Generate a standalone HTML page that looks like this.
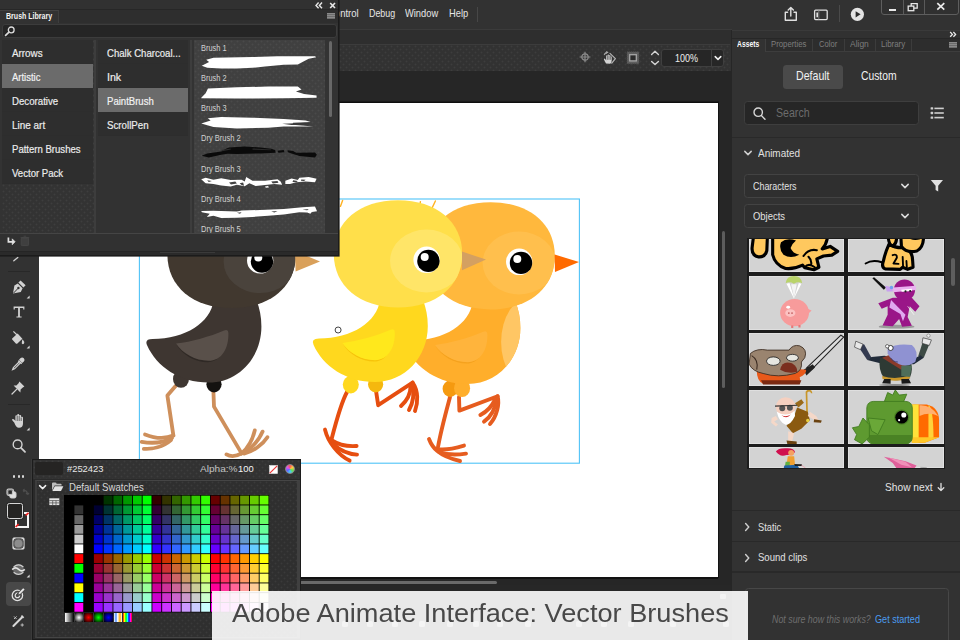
<!DOCTYPE html>
<html lang="en">
<head>
<meta charset="utf-8">
<title>Adobe Animate Interface: Vector Brushes</title>
<style>
*{box-sizing:border-box;margin:0;padding:0}
html,body{width:960px;height:640px;overflow:hidden;background:#323232}
body{position:relative;font-family:"Liberation Sans",sans-serif;color:#e4e4e4;font-size:11px}
.abs{position:absolute}
#app{position:absolute;left:0;top:0;width:960px;height:640px;overflow:hidden;background:#323232}
.t{position:absolute;white-space:nowrap;line-height:1}
svg{position:absolute;overflow:visible}
/* top bars */
#menubar{left:0;top:0;width:960px;height:29px;background:#323232}
#bar2{left:0;top:29px;width:732px;height:15px;background:#2d2d2d;border-top:1px solid #3a3a3a}
#toolbar{left:0;top:44px;width:732px;height:27px;background:#323232;border-top:1px solid #3c3c3c}
#paste{left:38px;top:71px;width:694px;height:569px;background:#262626}
#stage{left:40px;top:103px;width:678px;height:474px;background:#fff}
#lefttools{left:0;top:71px;width:38px;height:569px;background:#323232}
#rpanel{left:732px;top:29px;width:228px;height:611px;background:#323232}
</style>
</head>
<body>
<div id="app">
<div class="abs" style="left:0px;top:0px;width:960px;height:29px;background:#323232;"></div>
<div class="abs" style="left:0px;top:29px;width:732px;height:15px;background:#2e2e2e;border-top:1px solid #3b3b3b;"></div>
<div class="abs" style="left:0px;top:44px;width:730.4px;height:26.599999999999994px;background:#323232;border-top:1px solid #3c3c3c;background-image:radial-gradient(circle at 1.5px 1.5px,rgba(255,255,255,.055) 0.6px,transparent 1.2px),radial-gradient(circle at 4.5px 4.5px,rgba(255,255,255,.055) 0.6px,transparent 1.2px);background-size:6px 6px;"></div>
<div class="abs" style="left:0px;top:71px;width:732px;height:569px;background:#262626;"></div>
<div class="abs" style="left:39px;top:585px;width:693px;height:55px;background:#272727;"></div>
<div class="abs" style="left:39px;top:101px;width:680px;height:1px;background:#1a1a1a;"></div>
<div class="abs" style="left:39px;top:102px;width:680px;height:1px;background:#0e0e0e;"></div>
<div class="abs" style="left:718px;top:102px;width:1.2000000000000455px;height:476px;background:#141414;"></div>
<div class="abs" style="left:39px;top:103px;width:679px;height:474px;background:#ffffff;"></div>
<div class="abs" style="left:39px;top:577px;width:679px;height:2px;background:#111;"></div>
<div class="abs" style="left:300px;top:580.8px;width:197px;height:3.400000000000091px;background:#6a6a6a;border-radius:2px;"></div>
<div class="abs" style="left:722px;top:231px;width:3px;height:157px;background:#5c5c5c;border-radius:2px;"></div>
<div class="abs" style="left:0px;top:71px;width:39px;height:569px;background:#323232;"></div>
<div class="t" style="left:327.50px;top:7.00px;height:13px;line-height:13px;font-size:11.2px;color:#e6e6e6;transform:scaleX(0.8503);transform-origin:0 50%;">Control</div>
<div class="t" style="left:368.80px;top:7.00px;height:13px;line-height:13px;font-size:11.2px;color:#e6e6e6;transform:scaleX(0.7938);transform-origin:0 50%;">Debug</div>
<div class="t" style="left:405.00px;top:7.00px;height:13px;line-height:13px;font-size:11.2px;color:#e6e6e6;transform:scaleX(0.8334);transform-origin:0 50%;">Window</div>
<div class="t" style="left:448.80px;top:7.00px;height:13px;line-height:13px;font-size:11.2px;color:#e6e6e6;transform:scaleX(0.8335);transform-origin:0 50%;">Help</div>
<div class="abs" style="left:477px;top:7px;width:1px;height:15px;background:#474747;"></div>
<svg style="left:783px;top:6px" width="16" height="16" viewBox="0 0 16 16" fill="none" stroke="#e0e0e0" stroke-width="1.4" stroke-linejoin="round" stroke-linecap="round"><path d="M4.6 6.2H2.3v8h11V6.2H11"/><path d="M7.8 10V1.6M5.2 4 7.8 1.4 10.4 4"/></svg>
<svg style="left:813px;top:8px" width="16" height="14" viewBox="0 0 16 14" fill="none" stroke="#e0e0e0" stroke-width="1.3"><rect x="1.6" y="2.2" width="12.6" height="9.4" rx="1"/><path d="M4.2 4.6v4.6" stroke-width="1.6"/><path d="M5.8 2.4v9" stroke="#7a7a7a" stroke-width="1"/></svg>
<div class="abs" style="left:838.5px;top:5px;width:1.0px;height:17px;background:#4a4a4a;"></div>
<svg style="left:850px;top:7px" width="15" height="15" viewBox="0 0 15 15"><circle cx="7.4" cy="7.3" r="6.6" fill="#e3e3e3"/><path d="M5.6 4.2 10.6 7.3 5.6 10.4Z" fill="#2b2b2b"/></svg>
<div class="abs" style="left:881px;top:-2px;width:78px;height:16.5px;background:#303030;border:1px solid #5e5e5e;border-radius:0 0 3px 3px;"></div>
<div class="abs" style="left:903px;top:0px;width:1px;height:14px;background:#5a5a5a;"></div>
<div class="abs" style="left:923.5px;top:0px;width:1.0px;height:14px;background:#5a5a5a;"></div>
<div class="abs" style="left:888.5px;top:8.5px;width:7.5px;height:2.0999999999999996px;background:#e8e8e8;"></div>
<svg style="left:907px;top:2px" width="13" height="11" viewBox="0 0 13 11" fill="none" stroke="#e8e8e8" stroke-width="1.3"><rect x="1.2" y="4.1" width="5.6" height="4.6"/><path d="M4.2 4V1.6h6v4.6H7"/></svg>
<svg style="left:935px;top:1px" width="12" height="11" viewBox="0 0 12 11" fill="none" stroke="#ececec" stroke-width="1.7"><path d="M2.3 2.2 9.3 8.6M9.3 2.2 2.3 8.6"/></svg>
<svg style="left:577px;top:49.4px" width="16" height="16" viewBox="0 0 16 16" fill="none" stroke="#8c8c8c" stroke-width="1.2"><circle cx="8" cy="8" r="3.2"/><path d="M8 2.8v10.4M2.6 8h10.8"/></svg>
<svg style="left:600px;top:49px" width="18" height="18" viewBox="0 0 18 18" fill="none" stroke-linejoin="round" stroke-linecap="round"><path d="M10 4.4 15.4 9.6 11.8 14.2" stroke="#b4b4b4" stroke-width="1.2"/><path d="M4.4 5.4Q5.6 3.4 7.6 3.4" stroke="#a8a8a8" stroke-width="1.2"/><path d="M7.6 3.4 6.6 2.4M7.6 3.4 6.4 4.4" stroke="#a8a8a8" stroke-width="1"/><path d="M6 14.6 4 10.8Q3.6 9.8 4.4 9.6Q5 9.6 5.4 10.2L6.2 11.4V7Q6.2 6.2 6.9 6.2Q7.6 6.2 7.6 7V6.2Q7.6 5.4 8.3 5.4Q9 5.4 9 6.2V6.8Q9 6 9.7 6Q10.4 6 10.4 6.8V7.8Q10.4 7.2 11 7.2Q11.7 7.2 11.7 8V11.6Q11.7 14.4 10 14.8Z" fill="#d4d4d4"/><path d="M7.6 7v3.4M9 6.8v3.6M10.4 7.8v2.6" stroke="#3a3a3a" stroke-width=".6"/></svg>
<svg style="left:625px;top:50px" width="16" height="16" viewBox="0 0 16 16"><rect x="2" y="1.8" width="12" height="12" fill="#5e5e5e" stroke="#4a4a4a" stroke-width="1" stroke-dasharray="1 1"/><rect x="4.7" y="4.7" width="6.6" height="6.2" fill="#2c2c2c" stroke="#a6a6a6" stroke-width="1.3"/></svg>
<svg style="left:649px;top:47px" width="12" height="22" viewBox="0 0 12 22" fill="none" stroke="#d4d4d4" stroke-width="1.4" stroke-linecap="round" stroke-linejoin="round"><path d="M2.6 7.4 6 4.2 9.4 7.4"/><path d="M2.6 14.4 6 17.6 9.4 14.4"/></svg>
<div class="abs" style="left:661px;top:48.5px;width:63px;height:18.0px;background:#262626;border:1px solid #3f3f3f;border-radius:3px;"></div>
<div class="abs" style="left:710.5px;top:49px;width:1.0px;height:17px;background:#3f3f3f;"></div>
<div class="t" style="left:674.50px;top:51.80px;height:13px;line-height:13px;font-size:10.6px;color:#ededed;transform:scaleX(0.8484);transform-origin:0 50%;">100%</div>
<svg style="left:712.6px;top:53px" width="10" height="10" viewBox="0 0 10 10" fill="none" stroke="#f0f0f0" stroke-width="1.5" stroke-linecap="round" stroke-linejoin="round"><path d="M2.2 3.6 5 6.4 7.8 3.6"/></svg>
<div class="abs" style="left:731px;top:29.5px;width:229px;height:610.5px;background:#323232;border-left:1px solid #262626;"></div>
<div class="abs" style="left:732px;top:29.5px;width:228px;height:9.0px;background:#313131;border-top:1px solid #3a3a3a;border-bottom:1px solid #272727;"></div>
<svg style="left:947.4px;top:30.2px" width="12" height="9" viewBox="0 0 12 9" fill="none" stroke="#ececec" stroke-width="1.3"><path d="M3.2 2 5.4 4.4 3.2 6.8M6.4 2 8.6 4.4 6.4 6.8"/></svg>
<div class="abs" style="left:732px;top:38.5px;width:228px;height:13.0px;background:#2d2d2d;border-bottom:1px solid #3d3d3d;"></div>
<div class="abs" style="left:732px;top:38.5px;width:33.5px;height:13.5px;background:#323232;border-right:1px solid #3f3f3f;"></div>
<div class="abs" style="left:812.0px;top:39px;width:1.0px;height:12px;background:#3c3c3c;"></div>
<div class="abs" style="left:843.5px;top:39px;width:1.0px;height:12px;background:#3c3c3c;"></div>
<div class="abs" style="left:875.0px;top:39px;width:1.0px;height:12px;background:#3c3c3c;"></div>
<div class="abs" style="left:910.5px;top:39px;width:1.0px;height:12px;background:#3c3c3c;"></div>
<div class="t" style="left:737.20px;top:38.90px;height:11px;line-height:11px;font-size:9.2px;color:#fafafa;transform:scaleX(0.7357);transform-origin:0 50%;font-weight:bold;">Assets</div>
<div class="t" style="left:770.60px;top:38.90px;height:11px;line-height:11px;font-size:9.2px;color:#7d7d7d;transform:scaleX(0.8442);transform-origin:0 50%;">Properties</div>
<div class="t" style="left:818.80px;top:38.90px;height:11px;line-height:11px;font-size:9.2px;color:#7d7d7d;transform:scaleX(0.8278);transform-origin:0 50%;">Color</div>
<div class="t" style="left:850.00px;top:38.90px;height:11px;line-height:11px;font-size:9.2px;color:#7d7d7d;transform:scaleX(0.9189);transform-origin:0 50%;">Align</div>
<div class="t" style="left:880.80px;top:38.90px;height:11px;line-height:11px;font-size:9.2px;color:#7d7d7d;transform:scaleX(0.8605);transform-origin:0 50%;">Library</div>
<div class="abs" style="left:948.8px;top:42px;width:8.0px;height:6px;background:#7b7b7b;background-image:repeating-linear-gradient(#8a8a8a 0 1.4px,#6c6c6c 1.4px 2px);"></div>
<div class="abs" style="left:783px;top:64.5px;width:59.5px;height:24.299999999999997px;background:#4a4a4a;border-radius:3.5px;"></div>
<div class="t" style="left:795.60px;top:68.70px;height:15px;line-height:15px;font-size:12.2px;color:#f2f2f2;transform:scaleX(0.8692);transform-origin:0 50%;">Default</div>
<div class="t" style="left:861.40px;top:68.70px;height:15px;line-height:15px;font-size:12.2px;color:#f2f2f2;transform:scaleX(0.8469);transform-origin:0 50%;">Custom</div>
<div class="abs" style="left:744.4px;top:101.2px;width:174.39999999999998px;height:23.39999999999999px;background:#262626;border:1px solid #3e3e3e;border-radius:3.5px;"></div>
<svg style="left:752px;top:105.5px" width="15" height="15" viewBox="0 0 15 15" fill="none" stroke="#d6d6d6" stroke-width="1.4" stroke-linecap="round"><circle cx="6.2" cy="6.2" r="4.2"/><path d="M9.4 9.6 13 13.2"/></svg>
<div class="t" style="left:775.60px;top:106.20px;height:14px;line-height:14px;font-size:12px;color:#6c6c6c;transform:scaleX(0.8837);transform-origin:0 50%;">Search</div>
<svg style="left:929.5px;top:106px" width="15" height="14" viewBox="0 0 15 14" fill="#cfcfcf"><rect x=".6" y="1.2" width="2.6" height="2.4" rx=".6"/><rect x="4.4" y="1.6" width="9.4" height="1.6"/><rect x=".6" y="5.8" width="2.6" height="2.4" rx=".6"/><rect x="4.4" y="6.2" width="9.4" height="1.6"/><rect x=".6" y="10.4" width="2.6" height="2.4" rx=".6"/><rect x="4.4" y="10.8" width="9.4" height="1.6"/></svg>
<div class="abs" style="left:732px;top:136.6px;width:228px;height:1.200000000000017px;background:#292929;"></div>
<svg style="left:743.2px;top:148px" width="10" height="10" viewBox="0 0 10 10" fill="none" stroke="#cfcfcf" stroke-width="1.5" stroke-linecap="round" stroke-linejoin="round"><path d="M1.8 3.4 5 6.6 8.2 3.4"/></svg>
<div class="t" style="left:757.60px;top:146.20px;height:14px;line-height:14px;font-size:11.8px;color:#e0e0e0;transform:scaleX(0.8425);transform-origin:0 50%;">Animated</div>
<div class="abs" style="left:744.4px;top:173.8px;width:174.39999999999998px;height:23.799999999999983px;background:#2f2f2f;border:1px solid #434343;border-radius:3.5px;"></div>
<div class="t" style="left:753.40px;top:178.90px;height:14px;line-height:14px;font-size:11.6px;color:#e2e2e2;transform:scaleX(0.7685);transform-origin:0 50%;">Characters</div>
<svg style="left:900px;top:181.1px" width="10" height="10" viewBox="0 0 10 10" fill="none" stroke="#dcdcdc" stroke-width="1.5" stroke-linecap="round" stroke-linejoin="round"><path d="M1.8 3.4 5 6.6 8.2 3.4"/></svg>
<div class="abs" style="left:744.4px;top:203.8px;width:174.39999999999998px;height:23.799999999999983px;background:#2f2f2f;border:1px solid #434343;border-radius:3.5px;"></div>
<div class="t" style="left:753.40px;top:208.90px;height:14px;line-height:14px;font-size:11.6px;color:#e2e2e2;transform:scaleX(0.8137);transform-origin:0 50%;">Objects</div>
<svg style="left:900px;top:211.1px" width="10" height="10" viewBox="0 0 10 10" fill="none" stroke="#dcdcdc" stroke-width="1.5" stroke-linecap="round" stroke-linejoin="round"><path d="M1.8 3.4 5 6.6 8.2 3.4"/></svg>
<svg style="left:929.6px;top:179.4px" width="14" height="14" viewBox="0 0 14 14"><path d="M.8 1h12.2L8.2 6.8V12.6L5.6 11V6.8Z" fill="#e0e0e0"/></svg>
<div class="abs" style="left:747.4px;top:238px;width:197.60000000000002px;height:230.8px;background:#1c1c1c;"></div>
<div class="abs" style="left:748.6px;top:239.3px;width:95.79999999999995px;height:33.099999999999966px;background:#d3d3d3;overflow:hidden;box-shadow:inset 0 0 0 0.6px #ececec;"><svg style="left:-2.60px;top:-3.30px" width="200.00" height="200.00" viewBox="0 0 960 960"><g fill="#FFC85E" stroke="#000" stroke-width="15" stroke-linejoin="round" stroke-linecap="round"><path d="M40,-30 L104,-30 L100,70 Q92,104 58,100 Q24,92 30,50Z"/><path d="M128,-30 L392,-30 Q396,30 366,62 L404,50 L440,74 L412,92 L372,96 L340,110 L350,150 L326,162 L282,152 L272,140 Q230,160 190,156 Q140,140 128,90Z"/><path d="M276,96 Q300,60 340,68 M300,100 Q318,118 312,140 M282,150 Q300,128 330,150" fill="none" stroke-width="10"/></g><path d="M168,30 Q196,6 240,22 Q222,36 214,58 Q224,84 256,90 Q214,112 180,90 Q156,64 168,30Z" fill="#000"/></svg></div>
<div class="abs" style="left:848.0px;top:239.3px;width:95.79999999999995px;height:33.099999999999966px;background:#d3d3d3;overflow:hidden;box-shadow:inset 0 0 0 0.6px #ececec;"><svg style="left:-102.00px;top:-3.30px" width="200.00" height="200.00" viewBox="0 0 960 960"><path d="M574,132 Q606,112 652,126" fill="none" stroke="#000" stroke-width="9" stroke-linecap="round"/><g fill="#FFC85E" stroke="#000" stroke-width="15" stroke-linejoin="round" stroke-linecap="round"><path d="M686,40 Q720,60 760,56 Q800,70 800,120 L802,150 L776,160 L752,150 L740,160 L668,158 Q648,150 660,118 Q668,80 686,40Z"/><path d="M682,-20 L720,-20 Q730,30 706,48 Q680,44 682,-20Z"/><path d="M742,-20 L850,-20 Q860,50 820,72 Q770,84 746,50Z"/><path d="M704,92 Q726,84 724,104 L708,132 L732,134 M752,100 L754,146 M770,120 L772,150" fill="none" stroke-width="9"/></g><path d="M760,-10 Q790,30 836,16 L840,-10Z" fill="#000"/></svg></div>
<div class="abs" style="left:748.6px;top:275.8px;width:95.79999999999995px;height:53.80000000000001px;background:#d3d3d3;overflow:hidden;box-shadow:inset 0 0 0 0.6px #ececec;"><svg style="left:-4.60px;top:-41.80px" width="204.00" height="204.00" viewBox="0 0 960 960"><path d="M196,232 Q200,198 235,198 Q270,198 274,232 Q256,222 235,234 Q214,222 196,232Z" fill="#B9D36A"/><path d="M200,234 L235,304 L270,234 L258,230 L236,300 L214,230Z" fill="#fff"/><path d="M222,236 L236,300 L248,236Z" fill="#f4f4f4"/><ellipse cx="238" cy="370" rx="68" ry="64" fill="#F79B9B"/><ellipse cx="218" cy="372" rx="24" ry="18" fill="#FBC2C2"/><circle cx="211" cy="372" r="4" fill="#C25A5A"/><circle cx="226" cy="372" r="4" fill="#C25A5A"/><ellipse cx="208" cy="345" rx="9" ry="7" fill="#fff"/><path d="M296,350 L318,360 L300,378Z" fill="#F79B9B"/><path d="M222,430 h10 v12 h-10z M256,428 h10 v12 h-10z" fill="#E87878"/></svg></div>
<div class="abs" style="left:848.0px;top:275.8px;width:95.79999999999995px;height:53.80000000000001px;background:#d3d3d3;overflow:hidden;box-shadow:inset 0 0 0 0.6px #ececec;"><svg style="left:-104.00px;top:-41.80px" width="204.00" height="204.00" viewBox="0 0 960 960"><ellipse cx="718" cy="436" rx="84" ry="9" fill="#9a9a9a"/><path d="M604,208 L612,204 L668,252 L658,262Z" fill="#111"/><path d="M700,300 L790,300 L826,340 L806,366 L780,340 L770,390 L790,432 L744,436 L730,400 L700,434 L652,430 L676,380 L676,340 L648,352 L632,326 Z" fill="#9A1688"/><circle cx="755" cy="264" r="50" fill="#9A1688"/><path d="M700,252 L808,244 L810,264 L704,274Z" fill="#EAB0F0"/><path d="M740,262 L790,258 L790,268 L742,272Z" fill="#fff"/><circle cx="760" cy="270" r="5" fill="#222"/><circle cx="782" cy="268" r="5" fill="#222"/><path d="M664,244 L700,250 L700,270 L672,270Z" fill="#C8A0F0"/><circle cx="694" cy="252" r="8" fill="#6FA0F0"/><path d="M692,310 L760,380 L748,410 L736,376 L684,346Z" fill="#E0A8F0"/><path d="M770,340 L800,380" stroke="#fff" stroke-width="3"/></svg></div>
<div class="abs" style="left:748.6px;top:332.7px;width:95.79999999999995px;height:53.80000000000001px;background:#d3d3d3;overflow:hidden;box-shadow:inset 0 0 0 0.6px #ececec;"><svg style="left:-4.60px;top:-4.70px" width="204.00" height="204.00" viewBox="0 0 960 960"><path d="M296,186 L456,34 L470,42 L318,196Z" fill="#ddd" stroke="#222" stroke-width="5"/><path d="M280,196 L324,170 L334,186 L294,224Z" fill="#222"/><path d="M60,200 Q180,180 292,196 Q296,214 262,232 Q270,260 240,264 L90,262 Q60,250 60,200Z" fill="#E8591A"/><path d="M80,246 L270,246 L262,266 L90,266Z" fill="#7A2A12"/><path d="M30,120 Q60,94 110,104 L212,104 Q230,76 262,84 Q300,100 286,140 L270,160 Q276,200 240,214 Q160,236 90,214 Q40,204 24,170 Z" fill="#9A846F" stroke="#3a2a20" stroke-width="4"/><ellipse cx="138" cy="156" rx="32" ry="20" fill="#E6E6E0" stroke="#222" stroke-width="4"/><ellipse cx="228" cy="140" rx="28" ry="16" fill="#E6E6E0" stroke="#222" stroke-width="4"/><path d="M170,196 Q180,150 226,166 Q254,184 250,206 Q210,220 170,196Z" fill="#7B2E1E"/><path d="M36,130 Q70,150 60,196" fill="none" stroke="#3a2a20" stroke-width="5"/></svg></div>
<div class="abs" style="left:848.0px;top:332.7px;width:95.79999999999995px;height:53.80000000000001px;background:#d3d3d3;overflow:hidden;box-shadow:inset 0 0 0 0.6px #ececec;"><svg style="left:-104.00px;top:-4.70px" width="204.00" height="204.00" viewBox="0 0 960 960"><ellipse cx="708" cy="268" rx="72" ry="5" fill="#8a8a8a"/><path d="M530,70 L566,78 L600,140 L580,150 L548,102Z" fill="#333A50"/><path d="M526,62 L560,76 L548,102 L520,90Z" fill="#e8e8e8" stroke="#333" stroke-width="3"/><path d="M846,50 L880,58 L846,140 L820,132Z" fill="#3C4A44"/><path d="M842,46 L882,56 L872,82 L838,72Z" fill="#e8e8e8" stroke="#333" stroke-width="3"/><circle cx="868" cy="36" r="8" fill="#eee" stroke="#444" stroke-width="2"/><path d="M580,150 L660,170 L800,170 L846,140 L830,128 L790,150 L660,130 L600,136Z" fill="#222C3A"/><path d="M640,140 Q630,200 660,236 Q720,256 780,236 Q800,190 780,150Z" fill="#2E3A34"/><path d="M650,140 L740,196 L760,176 L680,128Z" fill="#8A3A2A"/><path d="M650,226 Q716,246 780,222 L782,236 Q716,258 652,240Z" fill="#C8962A"/><path d="M740,176 L790,176 L780,230 L740,226Z" fill="#4E6E5A"/><path d="M660,240 L690,240 L690,262 L650,260Z M740,240 L776,240 L786,260 L742,262Z" fill="#1a1a1a"/><path d="M676,96 Q720,70 790,80 Q826,110 806,160 Q770,186 730,170 Q690,150 676,120Z" fill="#8F92D2"/><circle cx="690" cy="94" r="12" fill="#fff" stroke="#222" stroke-width="4"/><circle cx="674" cy="86" r="8" fill="#fff" stroke="#222" stroke-width="3"/><path d="M690,140 Q700,160 724,160" fill="none" stroke="#3a3a6a" stroke-width="4"/></svg></div>
<div class="abs" style="left:748.6px;top:389.7px;width:95.79999999999995px;height:53.900000000000034px;background:#d3d3d3;overflow:hidden;box-shadow:inset 0 0 0 0.6px #ececec;"><svg style="left:-4.60px;top:-5.70px" width="204.00" height="204.00" viewBox="0 0 960 960"><path d="M290,36 Q300,20 318,32 L322,44 L316,44 Q310,30 298,40 L302,176 L294,176Z" fill="#C8962A"/><path d="M240,90 L270,72 L282,88 L256,110Z" fill="#9A6A1A"/><path d="M250,110 L300,130 L310,170 L270,210 L230,232 L200,196 L236,150Z" fill="#8B5A10"/><path d="M208,222 L236,232 L226,270 L208,270Z" fill="#F5D8C8"/><path d="M200,266 L248,270 L248,282 L204,282Z" fill="#6A4210"/><path d="M310,130 L340,150 L352,172 L334,170 L300,150Z" fill="#F5D8C8"/><path d="M330,166 L366,172 L362,182 L328,180Z" fill="#6A4210"/><path d="M150,150 L130,160 L128,182 L150,200 L160,190 L142,176 L160,166Z" fill="#F5D8C8"/><circle cx="196" cy="108" r="46" fill="#F5D0C0"/><path d="M154,130 Q200,160 238,126 L240,150 Q220,192 196,192 Q166,180 154,130Z" fill="#fff"/><path d="M176,146 Q198,158 220,144 Q200,168 176,146Z" fill="#C82020"/><circle cx="180" cy="114" r="14" fill="#555"/><circle cx="216" cy="112" r="14" fill="#555"/><path d="M146,104 L250,100" stroke="#333" stroke-width="5"/><circle cx="300" cy="172" r="8" fill="#E8D040"/></svg></div>
<div class="abs" style="left:848.0px;top:389.7px;width:95.79999999999995px;height:53.900000000000034px;background:#d3d3d3;overflow:hidden;box-shadow:inset 0 0 0 0.6px #ececec;"><svg style="left:-104.00px;top:-5.70px" width="204.00" height="204.00" viewBox="0 0 960 960"><path d="M790,96 L860,96 Q918,110 918,170 L918,250 L850,276 L790,276Z" fill="#FF6A00"/><path d="M790,96 L822,96 L822,276 L790,276Z" fill="#FFE23A"/><path d="M868,100 Q890,106 892,250 L868,262Z" fill="#FFD23A"/><path d="M826,100 Q880,96 914,150 Q870,130 826,150Z" fill="#FFB070"/><path d="M790,250 L918,250 L850,276 L790,276Z" fill="#FFC828"/><path d="M660,84 L676,40 L700,52 L712,28 L730,52 L766,48 L748,90Z" fill="#5E9A30" stroke="#3E7A1E" stroke-width="4"/><rect x="578" y="82" width="214" height="200" rx="30" fill="#5E9A30" stroke="#3E7A1E" stroke-width="4"/><path d="M582,240 L790,240 L790,262 Q780,282 760,282 L610,282 Q584,280 582,240Z" fill="#4A8224"/><path d="M590,192 L560,160 L540,200 L510,206 L530,238 L520,262 L556,282 L590,250Z" fill="#5E9A30" stroke="#3E7A1E" stroke-width="4"/><path d="M584,160 L664,168 L630,238 L600,220Z" fill="#6AA838" stroke="#3E7A1E" stroke-width="4"/><circle cx="742" cy="156" r="36" fill="#4A8224"/><circle cx="742" cy="156" r="30" fill="#000"/><circle cx="752" cy="146" r="12" fill="#fff"/><circle cx="730" cy="170" r="5" fill="#fff"/></svg></div>
<div class="abs" style="left:748.6px;top:446.6px;width:95.79999999999995px;height:21.0px;background:#d3d3d3;overflow:hidden;box-shadow:inset 0 0 0 0.6px #ececec;"><svg style="left:-4.60px;top:-62.60px" width="204.00" height="204.00" viewBox="0 0 960 960"><path d="M150,318 Q160,300 200,302 Q236,300 240,320 Q230,336 200,334 Q170,346 150,318Z" fill="#D0104E"/><circle cx="222" cy="324" r="14" fill="#F5A060"/><path d="M206,340 L236,340 L240,380 L200,384Z" fill="#F0A030"/><path d="M196,366 L216,366 L214,392 L192,392Z" fill="#60B040"/><path d="M190,384 L250,380 L262,400 L186,400Z" fill="#2060A0"/><path d="M236,376 L272,378 L274,386 L240,386Z" fill="#222"/><path d="M270,382 L290,396" stroke="#F0A0B0" stroke-width="4"/></svg></div>
<div class="abs" style="left:848.0px;top:446.6px;width:95.79999999999995px;height:21.0px;background:#d3d3d3;overflow:hidden;box-shadow:inset 0 0 0 0.6px #ececec;"><svg style="left:-104.00px;top:-62.60px" width="204.00" height="204.00" viewBox="0 0 960 960"><path d="M658,342 L700,350 L760,364 L812,384 L800,400 L720,400 L700,372Z" fill="#E0609A"/><path d="M680,346 L760,366 L790,392 L740,380Z" fill="#F090B8"/><path d="M830,392 L860,394" stroke="#888" stroke-width="3"/></svg></div>
<div class="abs" style="left:951.4px;top:257.6px;width:3.6000000000000227px;height:28.0px;background:#5e5e5e;border-radius:2px;"></div>
<div class="t" style="left:885.00px;top:480.20px;height:14px;line-height:14px;font-size:11.6px;color:#e4e4e4;transform:scaleX(0.8788);transform-origin:0 50%;">Show next</div>
<svg style="left:935.6px;top:481px" width="10" height="12" viewBox="0 0 10 12" fill="none" stroke="#e0e0e0" stroke-width="1.3" stroke-linecap="round" stroke-linejoin="round"><path d="M5 2.4V9.6M2.2 6.8 5 9.6 7.8 6.8"/></svg>
<div class="abs" style="left:732px;top:510.0px;width:228px;height:1.2000000000000455px;background:#292929;"></div>
<div class="abs" style="left:732px;top:541.1999999999999px;width:228px;height:1.2000000000000455px;background:#292929;"></div>
<div class="abs" style="left:732px;top:571.4px;width:228px;height:1.2000000000000455px;background:#292929;"></div>
<svg style="left:741.6px;top:522.4px" width="10" height="10" viewBox="0 0 10 10" fill="none" stroke="#cfcfcf" stroke-width="1.4" stroke-linecap="round" stroke-linejoin="round"><path d="M3.6 1.6 6.8 5 3.6 8.4"/></svg>
<div class="t" style="left:757.60px;top:519.60px;height:14px;line-height:14px;font-size:11.6px;color:#e0e0e0;transform:scaleX(0.7997);transform-origin:0 50%;">Static</div>
<svg style="left:741.6px;top:553.2px" width="10" height="10" viewBox="0 0 10 10" fill="none" stroke="#cfcfcf" stroke-width="1.4" stroke-linecap="round" stroke-linejoin="round"><path d="M3.6 1.6 6.8 5 3.6 8.4"/></svg>
<div class="t" style="left:757.60px;top:550.40px;height:14px;line-height:14px;font-size:11.6px;color:#e0e0e0;transform:scaleX(0.8237);transform-origin:0 50%;">Sound clips</div>
<div class="abs" style="left:744.8px;top:588px;width:204.20000000000005px;height:72px;border:1px solid #474747;border-radius:3.5px;"></div>
<div class="t" style="left:772.00px;top:612.70px;height:13px;line-height:13px;font-size:10.6px;color:#6e6e6e;transform:scaleX(0.8344);transform-origin:0 50%;font-style:italic;">Not sure how this works?</div>
<div class="t" style="left:875.00px;top:612.70px;height:13px;line-height:13px;font-size:10.6px;color:#4b9cf0;transform:scaleX(0.8582);transform-origin:0 50%;">Get started</div>
<svg style="left:0;top:0" width="960" height="640" viewBox="0 0 960 640">
<rect x="139.4" y="199" width="440" height="264.2" fill="none" stroke="#4fc3f7" stroke-width="1.1"/>
<g stroke="#E65C1F" stroke-width="3.9" fill="none" stroke-linecap="round" stroke-linejoin="round">
<path d="M450,397 C446,412 441,430 438,447"/>
<path d="M429,439 C432,447 438,456 460,461"/><path d="M437,449 C446,451 456,448 464,445.6"/><path d="M439,452 C447,455 457,455 466,453.6"/>
<path d="M459,397 L459.4,410.6 L497.6,396.2"/>
<path d="M497.6,396.2 C499.6,404 497,416 490,424"/><path d="M496.6,398 C495.6,408 490.6,417 484,421.6"/><path d="M495,399.6 C491.6,407 486,412 480.4,415"/>
</g>
<g transform="translate(92.6,2)">
<ellipse cx="357.6" cy="386.7" rx="7.6" ry="8.2" fill="#F59A10"/>
<ellipse cx="369.5" cy="386.3" rx="8" ry="8.8" fill="#FFAE2B"/>
<path d="M380,300 C377,322 352,338.5 319,338.5 Q310.5,338.5 313.6,345 C323,366 346,382 375,382 C405,382 427.8,357 427.8,326 C427.8,316 426,308 423,300Z" fill="#FFAE2B"/>
<clipPath id="bc3"><path d="M380,300 C377,322 352,338.5 319,338.5 Q310.5,338.5 313.6,345 C323,366 346,382 375,382 C405,382 427.8,357 427.8,326 C427.8,316 426,308 423,300Z"/></clipPath>
<ellipse cx="439.5" cy="340" rx="31" ry="46" fill="#FFC664" clip-path="url(#bc3)"/>
<path d="M342.5,343.6 C349,354.6 362,361.6 374,361.6 C386,361.6 393.5,349 394.3,334 C393.5,347 386,360 374,360 C362,360 349,353 342.5,343.6Z" fill="#F5A21E"/>
<path d="M342.5,343 C358,341 376,336 390.5,329.8 Q394.6,328.2 394.8,332.6 C395.2,348 388,360.2 375,360.2 C362,360.2 349,353 342.5,343Z" fill="#FFB43C"/>
<path d="M333.8,253.8 C333.8,221.6 359.5,200.2 398.0,200.2 C436.5,200.2 462.2,221.6 462.2,253.8 C462.2,286.0 436.5,307.4 398.0,307.4 C359.5,307.4 333.8,286.0 333.8,253.8Z" fill="#FFB83D"/>
<clipPath id="hc3"><path d="M333.8,253.8 C333.8,221.6 359.5,200.2 398.0,200.2 C436.5,200.2 462.2,221.6 462.2,253.8 C462.2,286.0 436.5,307.4 398.0,307.4 C359.5,307.4 333.8,286.0 333.8,253.8Z"/></clipPath>
<ellipse cx="426.5" cy="261" rx="36.5" ry="31.5" fill="#FFBF4D" clip-path="url(#hc3)"/>
<circle cx="426.6" cy="259.8" r="13.2" fill="#fff"/>
<circle cx="428.4" cy="260.9" r="11.2" fill="#000"/>
<circle cx="424.7" cy="257" r="4" fill="#fff"/>
</g>
<path d="M554.6,254.4 L579,262 L555,272Z" fill="#FF6A00"/>
<g stroke="#E64E10" stroke-width="3.9" fill="none" stroke-linecap="round" stroke-linejoin="round">
<path d="M347,392 C341.5,402 336.5,420 331.6,439"/>
<path d="M325,429.6 C328,442 338,455 349.6,460.6"/><path d="M331,440 C339,445 349,446.6 356.6,446"/><path d="M333,444 C340,450.6 349,454 357,454.6"/>
<path d="M376.2,392 L378.2,405.2 L412.6,382.6"/>
<path d="M412.6,382.6 C418.6,391 418,403 415,411"/><path d="M412.2,384.6 C414.6,394 413,403 409,410"/><path d="M410.6,386 C410.6,394 406.6,401 401,406"/>
</g>
<g stroke="#FFB223" stroke-width="1.4" fill="none" stroke-linecap="round"><path d="M431.4,209.4 L435.4,201"/><path d="M420,205 L420.4,201.6"/><path d="M340.4,206.4 L342.6,200.4"/></g>
<g transform="translate(0,0)">
<ellipse cx="375.6" cy="384.3" rx="7.6" ry="8.2" fill="#F5B80E"/>
<ellipse cx="350.8" cy="384.6" rx="8" ry="8.8" fill="#FFD81E"/>
<path d="M380,300 C377,322 352,338.5 319,338.5 Q310.5,338.5 313.6,345 C323,366 346,382 375,382 C405,382 427.8,357 427.8,326 C427.8,316 426,308 423,300Z" fill="#FFD81E"/>
<path d="M342.5,343.6 C349,354.6 362,361.6 374,361.6 C386,361.6 393.5,349 394.3,334 C393.5,347 386,360 374,360 C362,360 349,353 342.5,343.6Z" fill="#F7C30A"/>
<path d="M342.5,343 C358,341 376,336 390.5,329.8 Q394.6,328.2 394.8,332.6 C395.2,348 388,360.2 375,360.2 C362,360.2 349,353 342.5,343Z" fill="#FFE81C"/>
<path d="M333.8,253.8 C333.8,221.6 359.5,200.2 398.0,200.2 C436.5,200.2 462.2,221.6 462.2,253.8 C462.2,286.0 436.5,307.4 398.0,307.4 C359.5,307.4 333.8,286.0 333.8,253.8Z" fill="#FFDF4A"/>
<clipPath id="hc2"><path d="M333.8,253.8 C333.8,221.6 359.5,200.2 398.0,200.2 C436.5,200.2 462.2,221.6 462.2,253.8 C462.2,286.0 436.5,307.4 398.0,307.4 C359.5,307.4 333.8,286.0 333.8,253.8Z"/></clipPath>
<ellipse cx="426.5" cy="261" rx="36.5" ry="31.5" fill="#FFE568" clip-path="url(#hc2)"/>
<circle cx="426.6" cy="259.8" r="13.2" fill="#fff"/>
<circle cx="428.4" cy="260.9" r="11.2" fill="#000"/>
<circle cx="424.7" cy="257" r="4" fill="#fff"/>
</g>
<path d="M462,251.6 L486,259.6 L462,270.2Z" fill="#D4A061"/>
<g stroke="#CE8F5B" stroke-width="3.8" fill="none" stroke-linecap="round" stroke-linejoin="round">
<path d="M175.6,386 L167.4,395.6 L173.4,435.6"/>
<path d="M173.4,435.6 C165,439 154,438 145,434.4"/><path d="M172,438 C163,443 151,443.4 141.6,441.8"/><path d="M171,440 C163,447 152,449.4 143.8,448.8"/>
<path d="M213.4,391 L214,406.6 L241.6,453.4"/>
<path d="M241.6,453.4 C236,456.6 230,456.6 226.4,454.4"/><path d="M241.6,453.4 C249,447 253,438 254.8,430.4"/><path d="M243,453 C252,448 259,440 262.6,431.6"/><path d="M244,453.6 C254,451 263,444 267.4,437.2"/>
</g>
<g transform="translate(-166.4,0.6)">
<ellipse cx="380.4" cy="383.6" rx="7.6" ry="8.2" fill="#141210"/>
<ellipse cx="347.4" cy="378.4" rx="8" ry="8.8" fill="#3E3631"/>
<path d="M380,300 C377,322 352,338.5 319,338.5 Q310.5,338.5 313.6,345 C323,366 346,382 375,382 C405,382 427.8,357 427.8,326 C427.8,316 426,308 423,300Z" fill="#3E3631"/>
<path d="M342.5,343.6 C349,354.6 362,361.6 374,361.6 C386,361.6 393.5,349 394.3,334 C393.5,347 386,360 374,360 C362,360 349,353 342.5,343.6Z" fill="#2F2925"/>
<path d="M342.5,343 C358,341 376,336 390.5,329.8 Q394.6,328.2 394.8,332.6 C395.2,348 388,360.2 375,360.2 C362,360.2 349,353 342.5,343Z" fill="#59504A"/>
<path d="M333.8,253.8 C333.8,221.6 359.5,200.2 398.0,200.2 C436.5,200.2 462.2,221.6 462.2,253.8 C462.2,286.0 436.5,307.4 398.0,307.4 C359.5,307.4 333.8,286.0 333.8,253.8Z" fill="#41382F"/>
<clipPath id="hc1"><path d="M333.8,253.8 C333.8,221.6 359.5,200.2 398.0,200.2 C436.5,200.2 462.2,221.6 462.2,253.8 C462.2,286.0 436.5,307.4 398.0,307.4 C359.5,307.4 333.8,286.0 333.8,253.8Z"/></clipPath>
<ellipse cx="426.5" cy="261" rx="36.5" ry="31.5" fill="#4A433C" clip-path="url(#hc1)"/>
<circle cx="426.6" cy="259.8" r="13.2" fill="#fff"/>
<circle cx="428.4" cy="260.9" r="11.2" fill="#000"/>
<circle cx="424.7" cy="257" r="4" fill="#fff"/>
</g>
<path d="M295,251 L320,261.4 L295.6,271.4Z" fill="#D9A05A"/>
<circle cx="338.1" cy="330" r="3" fill="#fff" stroke="#444" stroke-width="1"/>
</svg>
<svg style="left:11.60px;top:255.00px" width="8" height="8" viewBox="0 0 8 8" ><path d="M1.8 5.8 5.8 2.4" stroke="#d2d2d2" stroke-width="1.3" stroke-linecap="round"/></svg>
<div class="abs" style="left:8px;top:270.5px;width:22px;height:1.1000000000000227px;background:#282828;"></div>
<svg style="left:10.50px;top:279.00px" width="16" height="16" viewBox="0 0 16 16" ><path d="M9.6 1.4 14.6 6.2 12.4 8.4 7.4 3.6Z" fill="#d2d2d2"/><path d="M6.8 4.4 11.6 9.2 9.8 13 2 14.6 3.4 6.6Z" fill="#d2d2d2"/><path d="M2.4 14.2 7 9.4" stroke="#323232" stroke-width="1"/><circle cx="7.4" cy="9" r="1.2" fill="#323232"/></svg>
<svg style="left:26.40px;top:294.60px" width="4" height="4" viewBox="0 0 4 4" ><path d="M3.6 .6V3.6H.6Z" fill="#d8d8d8"/></svg>
<svg style="left:11.60px;top:305.40px" width="14" height="14" viewBox="0 0 14 14" ><path d="M1.6 1.6H12.4V4.6H11.2V3H7.9V11.4H9.6V12.6H4.4V11.4H6.1V3H2.8V4.6H1.6Z" fill="#d2d2d2"/></svg>
<svg style="left:9.10px;top:329.50px" width="17" height="17" viewBox="0 0 17 17" ><path d="M3.4 8.2 8.6 3.6 13.4 8.8 8.4 13.6Q7.6 14.2 6.8 13.4L3.2 9.6Q2.6 8.8 3.4 8.2Z" fill="#d2d2d2"/><path d="M4.4 1.4 9.4 6.2" stroke="#d2d2d2" stroke-width="1.3" fill="none"/><path d="M13.6 9.2Q15.8 11.6 15 13.6Q13.8 14.8 12.8 13.4Q12.4 11.6 13.6 9.2Z" fill="#d2d2d2"/></svg>
<svg style="left:26.40px;top:345.40px" width="4" height="4" viewBox="0 0 4 4" ><path d="M3.6 .6V3.6H.6Z" fill="#d8d8d8"/></svg>
<svg style="left:10.40px;top:355.60px" width="16" height="16" viewBox="0 0 16 16" ><path d="M10.4 2.2Q12.2 .6 13.8 2.2Q15.4 3.8 13.8 5.6L12.2 7 9 3.8Z" fill="#d2d2d2"/><path d="M8.4 4.6 11.6 7.8" stroke="#d2d2d2" stroke-width="1.6"/><path d="M9 6 3.4 11.6 2.6 13.6 4.6 12.8 10.2 7.2" fill="none" stroke="#d2d2d2" stroke-width="1.2"/></svg>
<svg style="left:10.40px;top:380.40px" width="16" height="16" viewBox="0 0 16 16" ><path d="M9.4 1.6 14.4 6.6 12.8 7.4 10.6 9.6 10.4 12.6 3.6 5.6 6.4 5.4 8.6 3.2Z" fill="#d2d2d2"/><path d="M6.6 9.4 2 14" stroke="#d2d2d2" stroke-width="1.3" stroke-linecap="round"/></svg>
<div class="abs" style="left:8px;top:403.7px;width:22px;height:1.1000000000000227px;background:#282828;"></div>
<svg style="left:9.90px;top:412.50px" width="17" height="17" viewBox="0 0 17 17" ><path d="M4.2 9.6 2.4 7.4Q1.6 6.4 2.6 6Q3.6 5.8 4.4 6.8L5.4 8V3.2Q5.4 2.2 6.3 2.2Q7.2 2.2 7.2 3.2V2Q7.2 1 8.2 1Q9.2 1 9.2 2V3Q9.2 2 10.2 2Q11.2 2 11.2 3V4.6Q11.2 3.8 12.1 3.8Q13 3.8 13 4.8V10.4Q13 14.6 9 14.8Q6.2 15 4.2 9.6Z" fill="#d2d2d2"/><path d="M7.2 3V8M9.2 3V8M11.2 4.6V8" stroke="#323232" stroke-width=".7"/></svg>
<svg style="left:26.40px;top:426.60px" width="4" height="4" viewBox="0 0 4 4" ><path d="M3.6 .6V3.6H.6Z" fill="#d8d8d8"/></svg>
<svg style="left:10.60px;top:438.40px" width="16" height="16" viewBox="0 0 16 16" ><circle cx="6.6" cy="6.4" r="4.4" fill="none" stroke="#d2d2d2" stroke-width="1.4"/><path d="M10 9.8 14 13.8" stroke="#d2d2d2" stroke-width="1.8" stroke-linecap="round"/></svg>
<div class="abs" style="left:13.1px;top:475.4px;width:2.1999999999999993px;height:2.2000000000000455px;background:#d8d8d8;border-radius:50%;"></div>
<div class="abs" style="left:17.7px;top:475.4px;width:2.200000000000003px;height:2.2000000000000455px;background:#d8d8d8;border-radius:50%;"></div>
<div class="abs" style="left:22.299999999999997px;top:475.4px;width:2.200000000000003px;height:2.2000000000000455px;background:#d8d8d8;border-radius:50%;"></div>
<svg style="left:5.70px;top:488.10px" width="11" height="11" viewBox="0 0 11 11" ><rect x="1" y="1" width="6.4" height="6.4" rx="1.6" fill="#2a2a2a" stroke="#d0d0d0" stroke-width="1.1"/><rect x="3.8" y="3.8" width="6.2" height="6.2" rx="1.6" fill="#e0e0e0" stroke="#d0d0d0" stroke-width="1"/><rect x="1.8" y="1.8" width="4.6" height="4.6" rx="1" fill="#2a2a2a" stroke="#d0d0d0" stroke-width=".9"/></svg>
<svg style="left:20.70px;top:488.10px" width="9" height="9" viewBox="0 0 9 9" ><path d="M2 2.4Q6.4 2 6.6 6.6M6.6 6.6 5 5M6.6 6.6 8 5M2 2.4 3.6 1M2 2.4 3.4 4" fill="none" stroke="#4e4e4e" stroke-width="1.2"/></svg>
<div class="abs" style="left:15.2px;top:512.4px;width:13.8px;height:15.200000000000045px;background:#323232;border:2.4px solid #f6f6f6;"></div>
<svg style="left:15px;top:512px" width="14" height="16" viewBox="0 0 14 16"><path d="M.6 15 3.6 12.2M10.6 3.4 13.6 .8" stroke="#e22" stroke-width="1.7"/></svg>
<div class="abs" style="left:6.8px;top:503.4px;width:15.8px;height:15.800000000000068px;background:#252423;border:1.6px solid #d6d6d6;border-radius:2.4px;box-shadow:0 0 0 1px #2b2b2b;"></div>
<svg style="left:11.90px;top:536.90px" width="13" height="13" viewBox="0 0 13 13" ><rect x=".8" y=".8" width="11.4" height="11.4" rx="1.4" fill="#585858" stroke="#bdbdbd" stroke-width="1"/><circle cx="6.5" cy="6.5" r="4" fill="#8c8c8c"/><path d="M1.4 3.4V1.4H3.4M9.6 1.4H11.6V3.4M11.6 9.6V11.6H9.6M3.4 11.6H1.4V9.6" fill="none" stroke="#e6e6e6" stroke-width="1"/></svg>
<svg style="left:10.90px;top:562.50px" width="15" height="13" viewBox="0 0 15 13" ><ellipse cx="7.5" cy="6.5" rx="5.4" ry="5.4" fill="#6a6a6a"/><path d="M1.2 6.6Q4.4 3.4 7.6 6.4T13.8 6.4" fill="none" stroke="#e4e4e4" stroke-width="1.6"/><path d="M2.6 4Q7.5 -.4 12.4 4M2.6 9.2Q7.5 13.4 12.4 9.2" fill="none" stroke="#cfcfcf" stroke-width="1.2"/></svg>
<svg style="left:26.40px;top:573.60px" width="4" height="4" viewBox="0 0 4 4" ><path d="M3.6 .6V3.6H.6Z" fill="#d8d8d8"/></svg>
<div class="abs" style="left:6.4px;top:581.6px;width:24.6px;height:24.799999999999955px;background:#484848;border-radius:4px;"></div>
<svg style="left:10.90px;top:587.10px" width="15" height="15" viewBox="0 0 15 15" ><circle cx="6.4" cy="8.4" r="5.2" fill="none" stroke="#e0e0e0" stroke-width="1.3"/><circle cx="6.4" cy="8.4" r="2.2" fill="none" stroke="#e0e0e0" stroke-width="1.2"/><path d="M7 7.8 11.4 3.4" stroke="#484848" stroke-width="3.4"/><path d="M7.4 7.6 9.4 6.8 13.6 2.6 12.2 1.2 8 5.4Z" fill="#e8e8e8"/></svg>
<svg style="left:10.90px;top:612.90px" width="15" height="15" viewBox="0 0 15 15" ><path d="M2.4 13 10.6 4.8" stroke="#d8d8d8" stroke-width="2" stroke-linecap="round"/><path d="M10.4 2.6 12.6 4.8" stroke="#d8d8d8" stroke-width="1.8"/><path d="M3 3.4 5.6 6M5.6 3.4 3 6M11.2 10.4V13.6M9.6 12H12.8" stroke="#bdbdbd" stroke-width="1"/></svg>
<div class="abs" style="left:0px;top:0px;width:338.8px;height:256.2px;background:#333333;box-shadow:0 0 0 0.6px #1d1d1d;"></div>
<div class="abs" style="left:0px;top:0px;width:338px;height:9.5px;background:#313131;"></div>
<div class="abs" style="left:0px;top:8.8px;width:338px;height:1.0px;background:#272727;"></div>
<div class="abs" style="left:0px;top:9.8px;width:338px;height:13.2px;background:#2e2e2e;"></div>
<div class="abs" style="left:0px;top:9.5px;width:58.5px;height:13.5px;background:#323232;border-top:1px solid #424242;border-right:1px solid #3e3e3e;"></div>
<div class="t" style="left:6.20px;top:10.40px;height:12px;line-height:12px;font-size:9.6px;color:#f4f4f4;transform:scaleX(0.7339);transform-origin:0 50%;font-weight:bold;">Brush Library</div>
<div class="abs" style="left:0px;top:22.5px;width:338px;height:17.5px;background:#323232;"></div>
<svg style="left:313px;top:1px" width="26" height="9" viewBox="0 0 26 9" fill="none" stroke="#e6e6e6" stroke-width="1.4"><path d="M5.6 1.6 3 4.4 5.6 7.2M9 1.6 6.4 4.4 9 7.2"/><path d="M17.2 2 22 7M22 2 17.2 7" stroke-width="1.6"/></svg>
<div class="abs" style="left:327px;top:13px;width:8px;height:6px;background:#7b7b7b;background-image:repeating-linear-gradient(#8a8a8a 0 1.4px,#6c6c6c 1.4px 2px);"></div>
<div class="abs" style="left:1.6px;top:24.2px;width:335.79999999999995px;height:13.400000000000002px;background:#252525;border:1px solid #3c3c3c;border-radius:3px;"></div>
<svg style="left:4px;top:25px" width="12" height="12" viewBox="0 0 12 12" fill="none" stroke="#dcdcdc" stroke-width="1.3" stroke-linecap="round"><circle cx="7.2" cy="4.9" r="2.9"/><path d="M5 7.2 1.6 10.4" stroke-width="1.7"/></svg>
<div class="abs" style="left:1.5px;top:40px;width:92.5px;height:192.5px;background:#333;background-image:radial-gradient(circle at 1.5px 1.5px,rgba(255,255,255,.055) 0.6px,transparent 1.2px),radial-gradient(circle at 4.5px 4.5px,rgba(255,255,255,.055) 0.6px,transparent 1.2px);background-size:6px 6px;"></div>
<div class="abs" style="left:94px;top:40px;width:2px;height:192.5px;background:#3d3d3d;"></div>
<div class="abs" style="left:96px;top:40px;width:94px;height:192.5px;background:#323232;"></div>
<div class="abs" style="left:190px;top:40px;width:2px;height:192.5px;background:#3d3d3d;"></div>
<div class="abs" style="left:194px;top:40px;width:130.5px;height:192.5px;background:#404040;background-image:radial-gradient(circle at 1.5px 1.5px,rgba(255,255,255,.055) 0.6px,transparent 1.2px),radial-gradient(circle at 4.5px 4.5px,rgba(255,255,255,.055) 0.6px,transparent 1.2px);background-size:6px 6px;"></div>
<div class="abs" style="left:2px;top:40px;width:90.5px;height:24px;background:#2e2e2e;border-bottom:1px solid #2d2d2d;"></div>
<div class="t" style="left:12.00px;top:46.50px;height:13px;line-height:13px;font-size:11.1px;color:#ececec;transform:scaleX(0.8860);transform-origin:0 50%;-webkit-text-stroke:0.2px currentColor;">Arrows</div>
<div class="abs" style="left:2px;top:64px;width:90.5px;height:24px;background:#6b6b6b;border-bottom:1px solid #6b6b6b;"></div>
<div class="t" style="left:12.00px;top:70.50px;height:13px;line-height:13px;font-size:11.1px;color:#f2f2f2;transform:scaleX(0.8528);transform-origin:0 50%;-webkit-text-stroke:0.2px currentColor;">Artistic</div>
<div class="abs" style="left:2px;top:88px;width:90.5px;height:24px;background:#2e2e2e;border-bottom:1px solid #2d2d2d;"></div>
<div class="t" style="left:12.00px;top:94.50px;height:13px;line-height:13px;font-size:11.1px;color:#ececec;transform:scaleX(0.8708);transform-origin:0 50%;-webkit-text-stroke:0.2px currentColor;">Decorative</div>
<div class="abs" style="left:2px;top:112px;width:90.5px;height:24px;background:#2e2e2e;border-bottom:1px solid #2d2d2d;"></div>
<div class="t" style="left:12.00px;top:118.50px;height:13px;line-height:13px;font-size:11.1px;color:#ececec;transform:scaleX(0.8967);transform-origin:0 50%;-webkit-text-stroke:0.2px currentColor;">Line art</div>
<div class="abs" style="left:2px;top:136px;width:90.5px;height:24px;background:#2e2e2e;border-bottom:1px solid #2d2d2d;"></div>
<div class="t" style="left:12.00px;top:142.50px;height:13px;line-height:13px;font-size:11.1px;color:#ececec;transform:scaleX(0.8619);transform-origin:0 50%;-webkit-text-stroke:0.2px currentColor;">Pattern Brushes</div>
<div class="abs" style="left:2px;top:160px;width:90.5px;height:24px;background:#2e2e2e;border-bottom:1px solid #2d2d2d;"></div>
<div class="t" style="left:12.00px;top:166.50px;height:13px;line-height:13px;font-size:11.1px;color:#ececec;transform:scaleX(0.8644);transform-origin:0 50%;-webkit-text-stroke:0.2px currentColor;">Vector Pack</div>
<div class="abs" style="left:97.5px;top:40px;width:90.0px;height:24px;background:#2e2e2e;border-bottom:1px solid #2d2d2d;"></div>
<div class="t" style="left:107.40px;top:46.50px;height:13px;line-height:13px;font-size:11.1px;color:#ececec;transform:scaleX(0.8645);transform-origin:0 50%;-webkit-text-stroke:0.2px currentColor;">Chalk Charcoal...</div>
<div class="abs" style="left:97.5px;top:64px;width:90.0px;height:24px;background:#2e2e2e;border-bottom:1px solid #2d2d2d;"></div>
<div class="t" style="left:107.40px;top:70.50px;height:13px;line-height:13px;font-size:11.1px;color:#ececec;transform:scaleX(0.9590);transform-origin:0 50%;-webkit-text-stroke:0.2px currentColor;">Ink</div>
<div class="abs" style="left:97.5px;top:88px;width:90.0px;height:24px;background:#6b6b6b;border-bottom:1px solid #6b6b6b;"></div>
<div class="t" style="left:107.40px;top:94.50px;height:13px;line-height:13px;font-size:11.1px;color:#f2f2f2;transform:scaleX(0.8619);transform-origin:0 50%;-webkit-text-stroke:0.2px currentColor;">PaintBrush</div>
<div class="abs" style="left:97.5px;top:112px;width:90.0px;height:24px;background:#2e2e2e;border-bottom:1px solid #2d2d2d;"></div>
<div class="t" style="left:107.40px;top:118.50px;height:13px;line-height:13px;font-size:11.1px;color:#ececec;transform:scaleX(0.8756);transform-origin:0 50%;-webkit-text-stroke:0.2px currentColor;">ScrollPen</div>
<div class="abs" style="left:194px;top:40px;width:131px;height:192.5px;overflow:hidden">
<div class="t" style="left:7.40px;top:3.30px;height:11px;line-height:11px;font-size:9.3px;color:#d2d2d2;transform:scaleX(0.7987);transform-origin:0 50%;">Brush 1</div>
<div class="t" style="left:7.40px;top:33.35px;height:11px;line-height:11px;font-size:9.3px;color:#d2d2d2;transform:scaleX(0.7987);transform-origin:0 50%;">Brush 2</div>
<div class="t" style="left:7.40px;top:63.40px;height:11px;line-height:11px;font-size:9.3px;color:#d2d2d2;transform:scaleX(0.7987);transform-origin:0 50%;">Brush 3</div>
<div class="t" style="left:7.40px;top:93.45px;height:11px;line-height:11px;font-size:9.3px;color:#d2d2d2;transform:scaleX(0.8106);transform-origin:0 50%;">Dry Brush 2</div>
<div class="t" style="left:7.40px;top:123.50px;height:11px;line-height:11px;font-size:9.3px;color:#d2d2d2;transform:scaleX(0.8106);transform-origin:0 50%;">Dry Brush 3</div>
<div class="t" style="left:7.40px;top:153.55px;height:11px;line-height:11px;font-size:9.3px;color:#d2d2d2;transform:scaleX(0.8106);transform-origin:0 50%;">Dry Brush 4</div>
<div class="t" style="left:7.40px;top:183.60px;height:11px;line-height:11px;font-size:9.3px;color:#d2d2d2;transform:scaleX(0.8106);transform-origin:0 50%;">Dry Brush 5</div>
</div>
<svg style="left:190px;top:40px" width="150" height="100" viewBox="0 0 960 640"><g fill="#fff">
<path d="M75,165 L122,140 L104,126 L150,113 L400,109 L560,104 L800,104 L808,110 L760,120 L720,140 L690,157 L600,158 L480,170 L400,178 L300,182 L200,182 L110,178Z"/>
<path d="M72,369 L100,340 L115,310 L300,303 L500,298 L690,297 L714,316 L678,330 L730,346 L810,355 L810,369 L600,373 L300,375 L72,373Z"/>
<path d="M72,535 L132,515 L114,500 L200,492 L400,497 L600,505 L740,515 L772,525 L660,530 L655,543 L790,553 L600,553 L500,562 L300,566 L150,556Z"/>
</g><path d="M590,536 L760,530 L770,540 L650,544Z" fill="#3a3a3a"/></svg>
<svg style="left:190px;top:130px" width="150" height="100" viewBox="0 0 960 640">
<path d="M75,165 L110,150 L200,138 L230,120 L250,112 L350,106 L450,112 L520,120 L545,128 L548,146 L450,150 L300,154 L240,152 L200,158 L120,176Z" fill="#0a0a0a"/>
<path d="M560,132 L600,128 L604,142 L566,146Z M624,130 L660,134 L680,146 L800,144 L812,158 L800,176 L700,166 L650,150 L626,142Z" fill="#0a0a0a"/>
<path d="M200,128 L260,118 L262,124 L206,136Z M400,118 L520,124 L520,130 L400,126Z" fill="#2a2a2a"/>
<g fill="#fff"><path d="M72,315 L100,305 L150,318 L200,308 L260,320 L330,318 L350,330 L360,300 L400,325 L480,325 L560,315 L580,330 L590,350 L540,345 L480,352 L420,358 L380,340 L350,360 L300,350 L260,362 L200,355 L150,345 L100,340Z"/>
<path d="M610,325 L650,310 L690,320 L700,305 L760,300 L810,312 L800,335 L740,330 L680,335 L640,345 L610,345Z"/><path d="M480,362 L500,358 L505,368 L485,370Z"/>
<path d="M72,519 L150,517 L300,522 L330,515 L450,512 L600,505 L720,495 L800,489 L813,520 L780,524 L770,536 L750,528 L700,527 L600,541 L500,549 L400,556 L300,561 L200,563 L150,549 L108,556 L126,536 L76,527Z"/></g>
<g fill="#424242"><path d="M250,336 L290,330 L300,342 L262,348Z M318,340 L340,336 L346,356 L330,352Z M520,330 L560,326 L566,338 L530,342Z M660,322 L690,326 L680,334 L656,332Z M712,316 L740,318 L730,326 L710,324Z M110,322 L140,326 L120,332Z"/><path d="M300,530 L330,526 L320,536Z M520,522 L560,518 L540,528Z M720,510 L760,506 L750,514Z"/></g></svg>
<div class="abs" style="left:328.6px;top:40.8px;width:3.3999999999999773px;height:75.8px;background:#686868;border-radius:2px;"></div>
<div class="abs" style="left:0px;top:232.5px;width:338px;height:1.0px;background:#454545;"></div>
<div class="abs" style="left:0px;top:233.5px;width:338px;height:17.0px;background:#313131;"></div>
<div class="abs" style="left:0px;top:250.5px;width:338px;height:5.099999999999994px;background:#2a2a2a;border-top:1px solid #252525;"></div>
<div class="abs" style="left:160px;top:252px;width:55px;height:1px;background:#3a3a3a;"></div>
<svg style="left:5px;top:236px" width="12" height="11" viewBox="0 0 12 11" fill="none" stroke="#e2e2e2" stroke-width="1.7"><path d="M3.4 1.4v4.4h5.4"/><path d="M7.2 2.8 10.2 5.8 7.2 8.8Z" fill="#e2e2e2" stroke-width=".6"/></svg>
<svg style="left:20px;top:235px" width="10" height="12" viewBox="0 0 10 12" fill="#3f3f3f" stroke="#4a4a4a" stroke-width=".8"><rect x="1.2" y="3" width="7.4" height="7.6" rx="1"/><path d="M.6 2.6h8.6M3.6 1.2h2.6" fill="none"/></svg>
<div class="abs" style="left:338px;top:0px;width:1px;height:256.2px;background:#1b1b1b;"></div>
<div class="abs" style="left:0px;top:255.4px;width:339px;height:0.799999999999983px;background:#1b1b1b;"></div>
<div class="abs" style="left:32px;top:458.5px;width:268.5px;height:181.5px;background:#2a2a2a;border:1px solid #1c1c1c;box-shadow:-1px 0 0 #3a3a3a;"></div>
<div class="abs" style="left:33px;top:459.5px;width:266.5px;height:19.0px;background:#323232;background-image:radial-gradient(circle at 1.5px 1.5px,rgba(255,255,255,.055) 0.6px,transparent 1.2px),radial-gradient(circle at 4.5px 4.5px,rgba(255,255,255,.055) 0.6px,transparent 1.2px);background-size:6px 6px;"></div>
<div class="abs" style="left:34.6px;top:462px;width:28.4px;height:12.600000000000023px;background:#252423;border-radius:2px;"></div>
<div class="t" style="left:67.00px;top:462.90px;height:12px;line-height:12px;font-size:9.6px;color:#e6e6e6;transform:scaleX(0.9739);transform-origin:0 50%;">#252423</div>
<div class="t" style="left:200.00px;top:462.90px;height:12px;line-height:12px;font-size:9.6px;color:#c4c4c4;transform:scaleX(1.0515);transform-origin:0 50%;">Alpha:%</div>
<div class="t" style="left:237.80px;top:462.90px;height:12px;line-height:12px;font-size:9.6px;color:#f4f4f4;transform:scaleX(0.9739);transform-origin:0 50%;">100</div>
<svg style="left:268.6px;top:464.6px" width="9" height="9" viewBox="0 0 9 9"><rect x=".4" y=".4" width="8.2" height="8.2" fill="#fff" stroke="#ddd" stroke-width=".6"/><path d="M.8 8.2 8.2.8" stroke="#e33" stroke-width="1.1"/></svg>
<div class="abs" style="left:284.6px;top:463.8px;width:10.4px;height:10.4px;border-radius:50%;background:conic-gradient(#f55,#fc4,#6d5,#4cf,#66f,#d5e,#f55);border:1px solid #8a8a8a"></div>
<div class="abs" style="left:34.5px;top:479.5px;width:265.1px;height:158.0px;background:#2f2f2f;border:1px solid #454545;border-right:3.6px solid #404040;border-left:2px solid #3c3c3c;background-image:radial-gradient(circle at 1.5px 1.5px,rgba(255,255,255,.055) 0.6px,transparent 1.2px),radial-gradient(circle at 4.5px 4.5px,rgba(255,255,255,.055) 0.6px,transparent 1.2px);background-size:6px 6px;"></div>
<svg style="left:37px;top:482px" width="12" height="10" viewBox="0 0 12 10" fill="none" stroke="#f0f0f0" stroke-width="1.5" stroke-linecap="round" stroke-linejoin="round"><path d="M2.6 3.6 5.6 6.6 8.6 3.6"/></svg>
<svg style="left:50.5px;top:481px" width="13" height="11" viewBox="0 0 13 11"><path d="M1 9.6V2.4Q1 1.4 2 1.4H4.6L5.8 2.8H9.8Q10.6 2.8 10.6 3.8V4.6H3.6L1 9.6Z" fill="#bdbdbd"/><path d="M1.4 10 3.8 5.2H12.4L10 10Z" fill="#e2e2e2"/></svg>
<div class="t" style="left:69.00px;top:482.20px;height:12px;line-height:12px;font-size:10.4px;color:#d8d8d8;transform:scaleX(0.9242);transform-origin:0 50%;">Default Swatches</div>
<svg style="left:49px;top:498px" width="11" height="8" viewBox="0 0 11 8"><rect x=".3" y=".3" width="10" height="6.8" fill="#e4e4e4"/><path d="M.3 2.6h10M3.7 2.6v4.6M7 2.6v4.6M.3 4.9h10" stroke="#555" stroke-width=".8" fill="none"/></svg>
<svg style="left:64.4px;top:495.2px" width="205.15" height="127.40" viewBox="0 0 205.15 127.40">
<rect x="0" y="0" width="205.15" height="117.40" fill="#000"/>
<rect x="39.65" y="0.65" width="8.85" height="8.85" fill="#003300"/>
<rect x="49.40" y="0.65" width="8.85" height="8.85" fill="#006600"/>
<rect x="59.15" y="0.65" width="8.85" height="8.85" fill="#009900"/>
<rect x="68.90" y="0.65" width="8.85" height="8.85" fill="#00CC00"/>
<rect x="78.65" y="0.65" width="8.85" height="8.85" fill="#00FF00"/>
<rect x="88.40" y="0.65" width="8.85" height="8.85" fill="#330000"/>
<rect x="98.15" y="0.65" width="8.85" height="8.85" fill="#333300"/>
<rect x="107.90" y="0.65" width="8.85" height="8.85" fill="#336600"/>
<rect x="117.65" y="0.65" width="8.85" height="8.85" fill="#339900"/>
<rect x="127.40" y="0.65" width="8.85" height="8.85" fill="#33CC00"/>
<rect x="137.15" y="0.65" width="8.85" height="8.85" fill="#33FF00"/>
<rect x="146.90" y="0.65" width="8.85" height="8.85" fill="#660000"/>
<rect x="156.65" y="0.65" width="8.85" height="8.85" fill="#663300"/>
<rect x="166.40" y="0.65" width="8.85" height="8.85" fill="#666600"/>
<rect x="176.15" y="0.65" width="8.85" height="8.85" fill="#669900"/>
<rect x="185.90" y="0.65" width="8.85" height="8.85" fill="#66CC00"/>
<rect x="195.65" y="0.65" width="8.85" height="8.85" fill="#66FF00"/>
<rect x="10.40" y="10.40" width="8.85" height="8.85" fill="#333333"/>
<rect x="29.90" y="10.40" width="8.85" height="8.85" fill="#000033"/>
<rect x="39.65" y="10.40" width="8.85" height="8.85" fill="#003333"/>
<rect x="49.40" y="10.40" width="8.85" height="8.85" fill="#006633"/>
<rect x="59.15" y="10.40" width="8.85" height="8.85" fill="#009933"/>
<rect x="68.90" y="10.40" width="8.85" height="8.85" fill="#00CC33"/>
<rect x="78.65" y="10.40" width="8.85" height="8.85" fill="#00FF33"/>
<rect x="88.40" y="10.40" width="8.85" height="8.85" fill="#330033"/>
<rect x="98.15" y="10.40" width="8.85" height="8.85" fill="#333333"/>
<rect x="107.90" y="10.40" width="8.85" height="8.85" fill="#336633"/>
<rect x="117.65" y="10.40" width="8.85" height="8.85" fill="#339933"/>
<rect x="127.40" y="10.40" width="8.85" height="8.85" fill="#33CC33"/>
<rect x="137.15" y="10.40" width="8.85" height="8.85" fill="#33FF33"/>
<rect x="146.90" y="10.40" width="8.85" height="8.85" fill="#660033"/>
<rect x="156.65" y="10.40" width="8.85" height="8.85" fill="#663333"/>
<rect x="166.40" y="10.40" width="8.85" height="8.85" fill="#666633"/>
<rect x="176.15" y="10.40" width="8.85" height="8.85" fill="#669933"/>
<rect x="185.90" y="10.40" width="8.85" height="8.85" fill="#66CC33"/>
<rect x="195.65" y="10.40" width="8.85" height="8.85" fill="#66FF33"/>
<rect x="10.40" y="20.15" width="8.85" height="8.85" fill="#666666"/>
<rect x="29.90" y="20.15" width="8.85" height="8.85" fill="#000066"/>
<rect x="39.65" y="20.15" width="8.85" height="8.85" fill="#003366"/>
<rect x="49.40" y="20.15" width="8.85" height="8.85" fill="#006666"/>
<rect x="59.15" y="20.15" width="8.85" height="8.85" fill="#009966"/>
<rect x="68.90" y="20.15" width="8.85" height="8.85" fill="#00CC66"/>
<rect x="78.65" y="20.15" width="8.85" height="8.85" fill="#00FF66"/>
<rect x="88.40" y="20.15" width="8.85" height="8.85" fill="#330066"/>
<rect x="98.15" y="20.15" width="8.85" height="8.85" fill="#333366"/>
<rect x="107.90" y="20.15" width="8.85" height="8.85" fill="#336666"/>
<rect x="117.65" y="20.15" width="8.85" height="8.85" fill="#339966"/>
<rect x="127.40" y="20.15" width="8.85" height="8.85" fill="#33CC66"/>
<rect x="137.15" y="20.15" width="8.85" height="8.85" fill="#33FF66"/>
<rect x="146.90" y="20.15" width="8.85" height="8.85" fill="#660066"/>
<rect x="156.65" y="20.15" width="8.85" height="8.85" fill="#663366"/>
<rect x="166.40" y="20.15" width="8.85" height="8.85" fill="#666666"/>
<rect x="176.15" y="20.15" width="8.85" height="8.85" fill="#669966"/>
<rect x="185.90" y="20.15" width="8.85" height="8.85" fill="#66CC66"/>
<rect x="195.65" y="20.15" width="8.85" height="8.85" fill="#66FF66"/>
<rect x="10.40" y="29.90" width="8.85" height="8.85" fill="#999999"/>
<rect x="29.90" y="29.90" width="8.85" height="8.85" fill="#000099"/>
<rect x="39.65" y="29.90" width="8.85" height="8.85" fill="#003399"/>
<rect x="49.40" y="29.90" width="8.85" height="8.85" fill="#006699"/>
<rect x="59.15" y="29.90" width="8.85" height="8.85" fill="#009999"/>
<rect x="68.90" y="29.90" width="8.85" height="8.85" fill="#00CC99"/>
<rect x="78.65" y="29.90" width="8.85" height="8.85" fill="#00FF99"/>
<rect x="88.40" y="29.90" width="8.85" height="8.85" fill="#330099"/>
<rect x="98.15" y="29.90" width="8.85" height="8.85" fill="#333399"/>
<rect x="107.90" y="29.90" width="8.85" height="8.85" fill="#336699"/>
<rect x="117.65" y="29.90" width="8.85" height="8.85" fill="#339999"/>
<rect x="127.40" y="29.90" width="8.85" height="8.85" fill="#33CC99"/>
<rect x="137.15" y="29.90" width="8.85" height="8.85" fill="#33FF99"/>
<rect x="146.90" y="29.90" width="8.85" height="8.85" fill="#660099"/>
<rect x="156.65" y="29.90" width="8.85" height="8.85" fill="#663399"/>
<rect x="166.40" y="29.90" width="8.85" height="8.85" fill="#666699"/>
<rect x="176.15" y="29.90" width="8.85" height="8.85" fill="#669999"/>
<rect x="185.90" y="29.90" width="8.85" height="8.85" fill="#66CC99"/>
<rect x="195.65" y="29.90" width="8.85" height="8.85" fill="#66FF99"/>
<rect x="10.40" y="39.65" width="8.85" height="8.85" fill="#CCCCCC"/>
<rect x="29.90" y="39.65" width="8.85" height="8.85" fill="#0000CC"/>
<rect x="39.65" y="39.65" width="8.85" height="8.85" fill="#0033CC"/>
<rect x="49.40" y="39.65" width="8.85" height="8.85" fill="#0066CC"/>
<rect x="59.15" y="39.65" width="8.85" height="8.85" fill="#0099CC"/>
<rect x="68.90" y="39.65" width="8.85" height="8.85" fill="#00CCCC"/>
<rect x="78.65" y="39.65" width="8.85" height="8.85" fill="#00FFCC"/>
<rect x="88.40" y="39.65" width="8.85" height="8.85" fill="#3300CC"/>
<rect x="98.15" y="39.65" width="8.85" height="8.85" fill="#3333CC"/>
<rect x="107.90" y="39.65" width="8.85" height="8.85" fill="#3366CC"/>
<rect x="117.65" y="39.65" width="8.85" height="8.85" fill="#3399CC"/>
<rect x="127.40" y="39.65" width="8.85" height="8.85" fill="#33CCCC"/>
<rect x="137.15" y="39.65" width="8.85" height="8.85" fill="#33FFCC"/>
<rect x="146.90" y="39.65" width="8.85" height="8.85" fill="#6600CC"/>
<rect x="156.65" y="39.65" width="8.85" height="8.85" fill="#6633CC"/>
<rect x="166.40" y="39.65" width="8.85" height="8.85" fill="#6666CC"/>
<rect x="176.15" y="39.65" width="8.85" height="8.85" fill="#6699CC"/>
<rect x="185.90" y="39.65" width="8.85" height="8.85" fill="#66CCCC"/>
<rect x="195.65" y="39.65" width="8.85" height="8.85" fill="#66FFCC"/>
<rect x="10.40" y="49.40" width="8.85" height="8.85" fill="#FFFFFF"/>
<rect x="29.90" y="49.40" width="8.85" height="8.85" fill="#0000FF"/>
<rect x="39.65" y="49.40" width="8.85" height="8.85" fill="#0033FF"/>
<rect x="49.40" y="49.40" width="8.85" height="8.85" fill="#0066FF"/>
<rect x="59.15" y="49.40" width="8.85" height="8.85" fill="#0099FF"/>
<rect x="68.90" y="49.40" width="8.85" height="8.85" fill="#00CCFF"/>
<rect x="78.65" y="49.40" width="8.85" height="8.85" fill="#00FFFF"/>
<rect x="88.40" y="49.40" width="8.85" height="8.85" fill="#3300FF"/>
<rect x="98.15" y="49.40" width="8.85" height="8.85" fill="#3333FF"/>
<rect x="107.90" y="49.40" width="8.85" height="8.85" fill="#3366FF"/>
<rect x="117.65" y="49.40" width="8.85" height="8.85" fill="#3399FF"/>
<rect x="127.40" y="49.40" width="8.85" height="8.85" fill="#33CCFF"/>
<rect x="137.15" y="49.40" width="8.85" height="8.85" fill="#33FFFF"/>
<rect x="146.90" y="49.40" width="8.85" height="8.85" fill="#6600FF"/>
<rect x="156.65" y="49.40" width="8.85" height="8.85" fill="#6633FF"/>
<rect x="166.40" y="49.40" width="8.85" height="8.85" fill="#6666FF"/>
<rect x="176.15" y="49.40" width="8.85" height="8.85" fill="#6699FF"/>
<rect x="185.90" y="49.40" width="8.85" height="8.85" fill="#66CCFF"/>
<rect x="195.65" y="49.40" width="8.85" height="8.85" fill="#66FFFF"/>
<rect x="10.40" y="59.15" width="8.85" height="8.85" fill="#FF0000"/>
<rect x="29.90" y="59.15" width="8.85" height="8.85" fill="#990000"/>
<rect x="39.65" y="59.15" width="8.85" height="8.85" fill="#993300"/>
<rect x="49.40" y="59.15" width="8.85" height="8.85" fill="#996600"/>
<rect x="59.15" y="59.15" width="8.85" height="8.85" fill="#999900"/>
<rect x="68.90" y="59.15" width="8.85" height="8.85" fill="#99CC00"/>
<rect x="78.65" y="59.15" width="8.85" height="8.85" fill="#99FF00"/>
<rect x="88.40" y="59.15" width="8.85" height="8.85" fill="#CC0000"/>
<rect x="98.15" y="59.15" width="8.85" height="8.85" fill="#CC3300"/>
<rect x="107.90" y="59.15" width="8.85" height="8.85" fill="#CC6600"/>
<rect x="117.65" y="59.15" width="8.85" height="8.85" fill="#CC9900"/>
<rect x="127.40" y="59.15" width="8.85" height="8.85" fill="#CCCC00"/>
<rect x="137.15" y="59.15" width="8.85" height="8.85" fill="#CCFF00"/>
<rect x="146.90" y="59.15" width="8.85" height="8.85" fill="#FF0000"/>
<rect x="156.65" y="59.15" width="8.85" height="8.85" fill="#FF3300"/>
<rect x="166.40" y="59.15" width="8.85" height="8.85" fill="#FF6600"/>
<rect x="176.15" y="59.15" width="8.85" height="8.85" fill="#FF9900"/>
<rect x="185.90" y="59.15" width="8.85" height="8.85" fill="#FFCC00"/>
<rect x="195.65" y="59.15" width="8.85" height="8.85" fill="#FFFF00"/>
<rect x="10.40" y="68.90" width="8.85" height="8.85" fill="#00FF00"/>
<rect x="29.90" y="68.90" width="8.85" height="8.85" fill="#990033"/>
<rect x="39.65" y="68.90" width="8.85" height="8.85" fill="#993333"/>
<rect x="49.40" y="68.90" width="8.85" height="8.85" fill="#996633"/>
<rect x="59.15" y="68.90" width="8.85" height="8.85" fill="#999933"/>
<rect x="68.90" y="68.90" width="8.85" height="8.85" fill="#99CC33"/>
<rect x="78.65" y="68.90" width="8.85" height="8.85" fill="#99FF33"/>
<rect x="88.40" y="68.90" width="8.85" height="8.85" fill="#CC0033"/>
<rect x="98.15" y="68.90" width="8.85" height="8.85" fill="#CC3333"/>
<rect x="107.90" y="68.90" width="8.85" height="8.85" fill="#CC6633"/>
<rect x="117.65" y="68.90" width="8.85" height="8.85" fill="#CC9933"/>
<rect x="127.40" y="68.90" width="8.85" height="8.85" fill="#CCCC33"/>
<rect x="137.15" y="68.90" width="8.85" height="8.85" fill="#CCFF33"/>
<rect x="146.90" y="68.90" width="8.85" height="8.85" fill="#FF0033"/>
<rect x="156.65" y="68.90" width="8.85" height="8.85" fill="#FF3333"/>
<rect x="166.40" y="68.90" width="8.85" height="8.85" fill="#FF6633"/>
<rect x="176.15" y="68.90" width="8.85" height="8.85" fill="#FF9933"/>
<rect x="185.90" y="68.90" width="8.85" height="8.85" fill="#FFCC33"/>
<rect x="195.65" y="68.90" width="8.85" height="8.85" fill="#FFFF33"/>
<rect x="10.40" y="78.65" width="8.85" height="8.85" fill="#0000FF"/>
<rect x="29.90" y="78.65" width="8.85" height="8.85" fill="#990066"/>
<rect x="39.65" y="78.65" width="8.85" height="8.85" fill="#993366"/>
<rect x="49.40" y="78.65" width="8.85" height="8.85" fill="#996666"/>
<rect x="59.15" y="78.65" width="8.85" height="8.85" fill="#999966"/>
<rect x="68.90" y="78.65" width="8.85" height="8.85" fill="#99CC66"/>
<rect x="78.65" y="78.65" width="8.85" height="8.85" fill="#99FF66"/>
<rect x="88.40" y="78.65" width="8.85" height="8.85" fill="#CC0066"/>
<rect x="98.15" y="78.65" width="8.85" height="8.85" fill="#CC3366"/>
<rect x="107.90" y="78.65" width="8.85" height="8.85" fill="#CC6666"/>
<rect x="117.65" y="78.65" width="8.85" height="8.85" fill="#CC9966"/>
<rect x="127.40" y="78.65" width="8.85" height="8.85" fill="#CCCC66"/>
<rect x="137.15" y="78.65" width="8.85" height="8.85" fill="#CCFF66"/>
<rect x="146.90" y="78.65" width="8.85" height="8.85" fill="#FF0066"/>
<rect x="156.65" y="78.65" width="8.85" height="8.85" fill="#FF3366"/>
<rect x="166.40" y="78.65" width="8.85" height="8.85" fill="#FF6666"/>
<rect x="176.15" y="78.65" width="8.85" height="8.85" fill="#FF9966"/>
<rect x="185.90" y="78.65" width="8.85" height="8.85" fill="#FFCC66"/>
<rect x="195.65" y="78.65" width="8.85" height="8.85" fill="#FFFF66"/>
<rect x="10.40" y="88.40" width="8.85" height="8.85" fill="#FFFF00"/>
<rect x="29.90" y="88.40" width="8.85" height="8.85" fill="#990099"/>
<rect x="39.65" y="88.40" width="8.85" height="8.85" fill="#993399"/>
<rect x="49.40" y="88.40" width="8.85" height="8.85" fill="#996699"/>
<rect x="59.15" y="88.40" width="8.85" height="8.85" fill="#999999"/>
<rect x="68.90" y="88.40" width="8.85" height="8.85" fill="#99CC99"/>
<rect x="78.65" y="88.40" width="8.85" height="8.85" fill="#99FF99"/>
<rect x="88.40" y="88.40" width="8.85" height="8.85" fill="#CC0099"/>
<rect x="98.15" y="88.40" width="8.85" height="8.85" fill="#CC3399"/>
<rect x="107.90" y="88.40" width="8.85" height="8.85" fill="#CC6699"/>
<rect x="117.65" y="88.40" width="8.85" height="8.85" fill="#CC9999"/>
<rect x="127.40" y="88.40" width="8.85" height="8.85" fill="#CCCC99"/>
<rect x="137.15" y="88.40" width="8.85" height="8.85" fill="#CCFF99"/>
<rect x="146.90" y="88.40" width="8.85" height="8.85" fill="#FF0099"/>
<rect x="156.65" y="88.40" width="8.85" height="8.85" fill="#FF3399"/>
<rect x="166.40" y="88.40" width="8.85" height="8.85" fill="#FF6699"/>
<rect x="176.15" y="88.40" width="8.85" height="8.85" fill="#FF9999"/>
<rect x="185.90" y="88.40" width="8.85" height="8.85" fill="#FFCC99"/>
<rect x="195.65" y="88.40" width="8.85" height="8.85" fill="#FFFF99"/>
<rect x="10.40" y="98.15" width="8.85" height="8.85" fill="#00FFFF"/>
<rect x="29.90" y="98.15" width="8.85" height="8.85" fill="#9900CC"/>
<rect x="39.65" y="98.15" width="8.85" height="8.85" fill="#9933CC"/>
<rect x="49.40" y="98.15" width="8.85" height="8.85" fill="#9966CC"/>
<rect x="59.15" y="98.15" width="8.85" height="8.85" fill="#9999CC"/>
<rect x="68.90" y="98.15" width="8.85" height="8.85" fill="#99CCCC"/>
<rect x="78.65" y="98.15" width="8.85" height="8.85" fill="#99FFCC"/>
<rect x="88.40" y="98.15" width="8.85" height="8.85" fill="#CC00CC"/>
<rect x="98.15" y="98.15" width="8.85" height="8.85" fill="#CC33CC"/>
<rect x="107.90" y="98.15" width="8.85" height="8.85" fill="#CC66CC"/>
<rect x="117.65" y="98.15" width="8.85" height="8.85" fill="#CC99CC"/>
<rect x="127.40" y="98.15" width="8.85" height="8.85" fill="#CCCCCC"/>
<rect x="137.15" y="98.15" width="8.85" height="8.85" fill="#CCFFCC"/>
<rect x="146.90" y="98.15" width="8.85" height="8.85" fill="#FF00CC"/>
<rect x="156.65" y="98.15" width="8.85" height="8.85" fill="#FF33CC"/>
<rect x="166.40" y="98.15" width="8.85" height="8.85" fill="#FF66CC"/>
<rect x="176.15" y="98.15" width="8.85" height="8.85" fill="#FF99CC"/>
<rect x="185.90" y="98.15" width="8.85" height="8.85" fill="#FFCCCC"/>
<rect x="195.65" y="98.15" width="8.85" height="8.85" fill="#FFFFCC"/>
<rect x="10.40" y="107.90" width="8.85" height="8.85" fill="#FF00FF"/>
<rect x="29.90" y="107.90" width="8.85" height="8.85" fill="#9900FF"/>
<rect x="39.65" y="107.90" width="8.85" height="8.85" fill="#9933FF"/>
<rect x="49.40" y="107.90" width="8.85" height="8.85" fill="#9966FF"/>
<rect x="59.15" y="107.90" width="8.85" height="8.85" fill="#9999FF"/>
<rect x="68.90" y="107.90" width="8.85" height="8.85" fill="#99CCFF"/>
<rect x="78.65" y="107.90" width="8.85" height="8.85" fill="#99FFFF"/>
<rect x="88.40" y="107.90" width="8.85" height="8.85" fill="#CC00FF"/>
<rect x="98.15" y="107.90" width="8.85" height="8.85" fill="#CC33FF"/>
<rect x="107.90" y="107.90" width="8.85" height="8.85" fill="#CC66FF"/>
<rect x="117.65" y="107.90" width="8.85" height="8.85" fill="#CC99FF"/>
<rect x="127.40" y="107.90" width="8.85" height="8.85" fill="#CCCCFF"/>
<rect x="137.15" y="107.90" width="8.85" height="8.85" fill="#CCFFFF"/>
<rect x="146.90" y="107.90" width="8.85" height="8.85" fill="#FF00FF"/>
<rect x="156.65" y="107.90" width="8.85" height="8.85" fill="#FF33FF"/>
<rect x="166.40" y="107.90" width="8.85" height="8.85" fill="#FF66FF"/>
<rect x="176.15" y="107.90" width="8.85" height="8.85" fill="#FF99FF"/>
<rect x="185.90" y="107.90" width="8.85" height="8.85" fill="#FFCCFF"/>
<rect x="195.65" y="107.90" width="8.85" height="8.85" fill="#FFFFFF"/>
</svg>
<div class="abs" style="left:64.8px;top:612.6px;width:8.950000000000003px;height:9.0px;background:linear-gradient(90deg,#fff,#000);"></div>
<div class="abs" style="left:74.55px;top:612.6px;width:8.950000000000003px;height:9.0px;background:radial-gradient(circle,#fff,#000);"></div>
<div class="abs" style="left:84.3px;top:612.6px;width:8.950000000000003px;height:9.0px;background:radial-gradient(circle,#f00,#000);"></div>
<div class="abs" style="left:94.05px;top:612.6px;width:8.950000000000003px;height:9.0px;background:radial-gradient(circle,#0f0,#000);"></div>
<div class="abs" style="left:103.8px;top:612.6px;width:8.950000000000003px;height:9.0px;background:radial-gradient(circle,#00f,#000);"></div>
<div class="abs" style="left:113.55px;top:612.6px;width:8.950000000000003px;height:9.0px;background:linear-gradient(90deg,#fff 0,#48f 25%,#fff 45%,#fa0 75%,#fff 100%);"></div>
<div class="abs" style="left:123.3px;top:612.6px;width:8.950000000000003px;height:9.0px;background:linear-gradient(90deg,#f00,#ff0,#0f0,#0ff,#00f,#f0f,#f00);"></div>
<div class="abs" style="left:342px;top:620.5px;width:6px;height:6.0px;background:#8a8a8a;border-radius:1.5px;"></div>
<div class="abs" style="left:367px;top:620.5px;width:6px;height:6.0px;background:#8a8a8a;border-radius:1.5px;"></div>
<div class="abs" style="left:392px;top:620.5px;width:6px;height:6.0px;background:#8a8a8a;border-radius:1.5px;"></div>
<div class="abs" style="left:419px;top:620.5px;width:6px;height:6.0px;background:#8a8a8a;border-radius:1.5px;"></div>
<div class="abs" style="left:447px;top:620.5px;width:6px;height:6.0px;background:#8a8a8a;border-radius:1.5px;"></div>
<div class="abs" style="left:473px;top:620.5px;width:6px;height:6.0px;background:#8a8a8a;border-radius:1.5px;"></div>
<div class="abs" style="left:497px;top:620.5px;width:6px;height:6.0px;background:#8a8a8a;border-radius:1.5px;"></div>
<div class="abs" style="left:525px;top:620.5px;width:6px;height:6.0px;background:#8a8a8a;border-radius:1.5px;"></div>
<div class="abs" style="left:576px;top:620.5px;width:6px;height:6.0px;background:#8a8a8a;border-radius:1.5px;"></div>
<div class="abs" style="left:601px;top:620.5px;width:6px;height:6.0px;background:#8a8a8a;border-radius:1.5px;"></div>
<div class="abs" style="left:628px;top:620.5px;width:6px;height:6.0px;background:#8a8a8a;border-radius:1.5px;"></div>
<div class="abs" style="left:670px;top:620.5px;width:6px;height:6.0px;background:#8a8a8a;border-radius:1.5px;"></div>
<div class="abs" style="left:723px;top:620.5px;width:6px;height:6.0px;background:#8a8a8a;border-radius:1.5px;"></div>
<div class="abs" style="left:719.5px;top:594px;width:6.0px;height:5px;background:#808080;border-radius:1px;"></div>
<div class="abs" style="left:212px;top:591.2px;width:536px;height:48.799999999999955px;background:rgba(255,255,255,0.9);"></div>
<div class="t" style="left:231.90px;top:597.70px;height:31px;line-height:31px;font-size:25.8px;color:#484848;transform:scaleX(1.0531);transform-origin:0 50%;will-change:transform;">Adobe Animate Interface: Vector Brushes</div>
</div>
</body>
</html>
